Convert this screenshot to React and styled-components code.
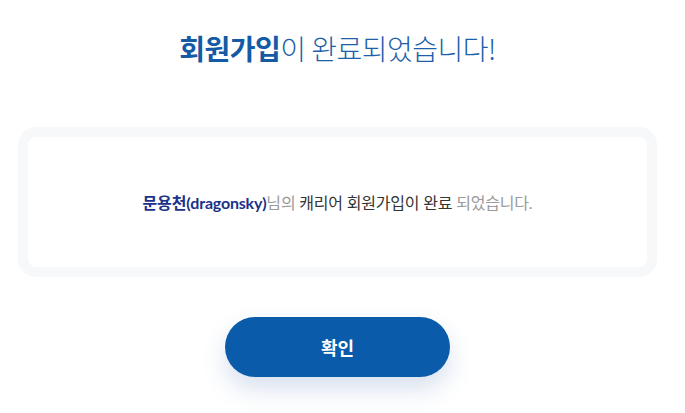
import React from 'react';
import styled, { createGlobalStyle } from 'styled-components';

const GlobalStyle = createGlobalStyle`
  html, body {
    margin: 0;
    padding: 0;
    background: #ffffff;
  }
  body {
    font-family: Lato, "Noto Sans CJK KR", sans-serif;
  }
`;

const Page = styled.div`
  width: 685px;
  height: 413px;
  box-sizing: border-box;
  padding: 28px 28px 0 18px;
  display: flex;
  flex-direction: column;
  align-items: center;
  overflow: hidden;
`;

const Title = styled.h1`
  margin: 0;
  height: 40px;
  line-height: 40px;
  font-family: "Noto Sans CJK KR", sans-serif;
  font-size: 28px;
  font-weight: 300;
  letter-spacing: -0.5px;
  color: #1d5fa9;
`;

const Strong = styled.strong`
  font-weight: 700;
  color: #145aa5;
`;

const Card = styled.div`
  margin-top: 59px;
  width: 100%;
  height: 150px;
  box-sizing: border-box;
  padding: 10px;
  background: #f7f8f9;
  border-radius: 18px;
`;

const CardInner = styled.div`
  height: 100%;
  background: #ffffff;
  border-radius: 8px;
  display: flex;
  align-items: center;
  justify-content: center;
`;

const Message = styled.p`
  margin: 0;
  font-size: 16px;
  letter-spacing: -0.2px;
  color: #333333;
`;

const Part = styled.span`
  color: ${p => (p.$tone === 'name' ? '#1b3288' : p.$tone === 'muted' ? '#9a9a9a' : '#333333')};
  font-weight: ${p => (p.$tone === 'name' ? 700 : 400)};
`;

const ConfirmButton = styled.button`
  margin-top: 40px;
  width: 225px;
  height: 60px;
  border: none;
  border-radius: 30px;
  background: #0b5bab;
  color: #ffffff;
  font-family: "Noto Sans CJK KR", sans-serif;
  font-size: 18px;
  font-weight: 700;
  cursor: pointer;
  box-shadow: 0 12px 24px rgba(40, 90, 160, 0.18);
`;

export default function App() {
  return (
    <>
      <GlobalStyle />
      <Page>
        <Title>
          <Strong>회원가입</Strong>이 완료되었습니다!
        </Title>
        <Card>
          <CardInner>
            <Message>
              <Part $tone="name">문용천(dragonsky)</Part>
              <Part $tone="muted">님의</Part> 캐리어 회원가입이 완료{' '}
              <Part $tone="muted">되었습니다.</Part>
            </Message>
          </CardInner>
        </Card>
        <ConfirmButton>확인</ConfirmButton>
      </Page>
    </>
  );
}
